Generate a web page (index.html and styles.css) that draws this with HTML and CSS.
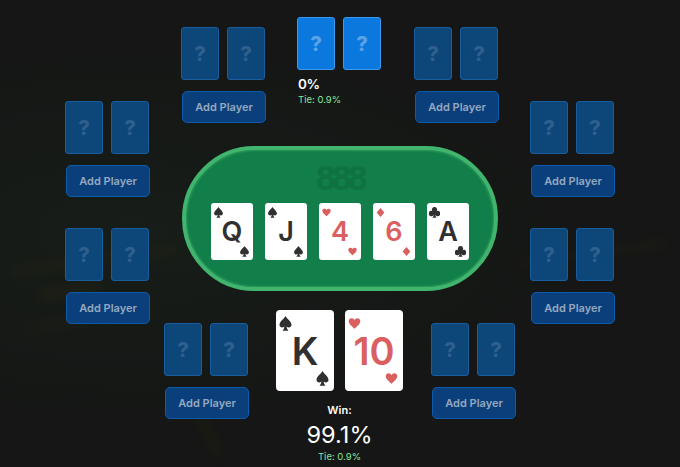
FILE: index.html
```html
<!DOCTYPE html>
<html lang="en">
<head>
    <meta charset="UTF-8">
    <meta name="viewport" content="width=device-width, initial-scale=1.0">
    <title>Poker Odds Calculator</title>
    <link rel="stylesheet" href="styles.css">
</head>
<body>

<svg class="defs" width="0" height="0" aria-hidden="true">
    <symbol id="spade" viewBox="0 0 20 20"><path d="M10 0C8 4 2 7 2 12c0 3 4 4.500 6.500 2C8.300 16.500 7.500 18 6 19.500h8C12.500 18 11.700 16.500 11.500 14c2.500 2.500 6.500 1 6.500-2 0-5-6-8-8-12z"/></symbol>
    <symbol id="heart" viewBox="-3 -3 26 26"><path d="M10 19C6 15 0 11 0 6c0-3 2.300-5 5-5 2.200 0 4 1.200 5 3.200C11 2.200 12.800 1 15 1c2.700 0 5 2 5 5 0 5-6 9-10 13z"/></symbol>
    <symbol id="diamond" viewBox="0 0 20 20"><path d="M10 2l7 8-7 8-7-8z"/></symbol>
    <symbol id="club" viewBox="0 0 20 20"><path d="M10 0a4.800 4.800 0 0 0-4 7.500A4.800 4.800 0 1 0 8.500 14C8.300 16.500 7.500 18 6 19.500h8c-1.500-1.500-2.300-3-2.500-5.500A4.800 4.800 0 1 0 14 7.500 4.800 4.800 0 0 0 10 0z"/></symbol>
</svg>

<div class="felt">
    <div class="streak streak-a"></div>
    <div class="streak streak-b"></div>
    <div class="streak streak-c"></div>
    <div class="streak streak-d"></div>
    <div class="streak streak-e"></div>
</div>

<div class="table">
    <div class="table-logo">888</div>
    <div class="board">
        <div class="card board-card">
            <svg class="pip pip-top"><use href="#spade"/></svg>
            <span class="rank">Q</span>
            <svg class="pip pip-bottom"><use href="#spade"/></svg>
        </div>
        <div class="card board-card">
            <svg class="pip pip-top"><use href="#spade"/></svg>
            <span class="rank">J</span>
            <svg class="pip pip-bottom"><use href="#spade"/></svg>
        </div>
        <div class="card board-card red">
            <svg class="pip pip-top"><use href="#heart"/></svg>
            <span class="rank">4</span>
            <svg class="pip pip-bottom"><use href="#heart"/></svg>
        </div>
        <div class="card board-card red">
            <svg class="pip pip-top"><use href="#diamond"/></svg>
            <span class="rank">6</span>
            <svg class="pip pip-bottom"><use href="#diamond"/></svg>
        </div>
        <div class="card board-card">
            <svg class="pip pip-top"><use href="#club"/></svg>
            <span class="rank">A</span>
            <svg class="pip pip-bottom"><use href="#club"/></svg>
        </div>
    </div>
</div>

<div class="seat seat-top-left">
    <div class="hand"><div class="blank">?</div><div class="blank">?</div></div>
    <button class="add-btn">Add Player</button>
</div>

<div class="seat seat-top-center active">
    <div class="hand"><div class="blank">?</div><div class="blank">?</div></div>
    <div class="seat-odds">
        <div class="odds-small">0%</div>
        <div class="tie">Tie: 0.9%</div>
    </div>
</div>

<div class="seat seat-top-right">
    <div class="hand"><div class="blank">?</div><div class="blank">?</div></div>
    <button class="add-btn">Add Player</button>
</div>

<div class="seat seat-left-upper">
    <div class="hand"><div class="blank">?</div><div class="blank">?</div></div>
    <button class="add-btn">Add Player</button>
</div>

<div class="seat seat-right-upper">
    <div class="hand"><div class="blank">?</div><div class="blank">?</div></div>
    <button class="add-btn">Add Player</button>
</div>

<div class="seat seat-left-lower">
    <div class="hand"><div class="blank">?</div><div class="blank">?</div></div>
    <button class="add-btn">Add Player</button>
</div>

<div class="seat seat-right-lower">
    <div class="hand"><div class="blank">?</div><div class="blank">?</div></div>
    <button class="add-btn">Add Player</button>
</div>

<div class="seat seat-bottom-left">
    <div class="hand"><div class="blank">?</div><div class="blank">?</div></div>
    <button class="add-btn">Add Player</button>
</div>

<div class="seat seat-bottom-right">
    <div class="hand"><div class="blank">?</div><div class="blank">?</div></div>
    <button class="add-btn">Add Player</button>
</div>

<div class="hero">
    <div class="hero-hand">
        <div class="card hero-card">
            <svg class="pip pip-top"><use href="#spade"/></svg>
            <span class="rank">K</span>
            <svg class="pip pip-bottom"><use href="#spade"/></svg>
        </div>
        <div class="card hero-card red">
            <svg class="pip pip-top"><use href="#heart"/></svg>
            <span class="rank">10</span>
            <svg class="pip pip-bottom"><use href="#heart"/></svg>
        </div>
    </div>
    <div class="win-label">Win:</div>
    <div class="win-value">99.1%</div>
    <div class="tie">Tie: 0.9%</div>
</div>

</body>
</html>
```

FILE: styles.css
```css
html, body {
    margin: 0;
    padding: 0;
}

body {
    position: relative;
    width: 680px;
    height: 467px;
    overflow: hidden;
    background-color: #151615;
    font-family: Inter, "Liberation Sans", sans-serif;
    color: #fff;
}

.defs {
    position: absolute;
}

/* background glow and streaks */
.felt {
    position: absolute;
    inset: 0;
    overflow: hidden;
    background: radial-gradient(ellipse at 20% 50%, #171d18 0%, #151615 60%);
}

.streak {
    position: absolute;
    background-color: #4a3c12;
    filter: blur(6px);
    opacity: 0.3;
    transform: rotate(-8deg);
}

.streak-a { left: 10px; top: 258px; width: 170px; height: 4px; }
.streak-b { left: 40px; top: 288px; width: 60px; height: 6px; }
.streak-c { left: 25px; top: 318px; width: 130px; height: 3px; }
.streak-d { left: 520px; top: 252px; width: 150px; height: 3px; }
.streak-e { left: 205px; top: 400px; width: 4px; height: 60px; transform: rotate(-25deg); }

/* table */
.table {
    position: absolute;
    left: 182px;
    top: 146px;
    box-sizing: border-box;
    width: 316px;
    height: 145px;
    display: flex;
    flex-direction: column;
    align-items: center;
    border: 4px solid #41b46d;
    border-radius: 73px;
    background-color: #127e49;
    box-shadow: inset 0 0 2px 1px #2c9a5b;
}

.table-logo {
    margin-top: 12px;
    height: 41px;
    font-family: "Liberation Sans", sans-serif;
    font-size: 35px;
    line-height: 32px;
    font-weight: 700;
    letter-spacing: -3.5px;
    color: #0e7341;
}

.board {
    display: flex;
    gap: 12px;
}

/* cards */
.card {
    position: relative;
    display: flex;
    align-items: center;
    justify-content: center;
    background-color: #fff;
    color: #303030;
    fill: #303030;
    font-weight: 600;
}

.card.red {
    color: #d9605f;
    fill: #d9605f;
}

.board-card {
    width: 42px;
    height: 57px;
    border-radius: 3px;
    font-size: 27px;
}

.hero-card {
    width: 58px;
    height: 81px;
    border-radius: 4px;
    font-size: 38px;
}

.rank {
    line-height: 1;
}

.pip {
    position: absolute;
    width: 11px;
    height: 11px;
}

.pip-top {
    left: 2px;
    top: 4px;
}

.pip-bottom {
    right: 3px;
    bottom: 3px;
}

.hero-card .pip {
    width: 15px;
    height: 15px;
}

.hero-card .pip-top {
    left: 2px;
    top: 6px;
}

.hero-card .pip-bottom {
    right: 4px;
    bottom: 5px;
}

/* seats around the table */
.seat {
    position: absolute;
    display: flex;
    flex-direction: column;
}

.seat-top-left { left: 181px; top: 27px; }
.seat-top-center { left: 297px; top: 17px; }
.seat-top-right { left: 414px; top: 27px; }
.seat-left-upper { left: 65px; top: 101px; }
.seat-right-upper { left: 530px; top: 101px; }
.seat-left-lower { left: 65px; top: 228px; }
.seat-right-lower { left: 530px; top: 228px; }
.seat-bottom-left { left: 164px; top: 323px; }
.seat-bottom-right { left: 431px; top: 323px; }

.hand {
    display: flex;
    gap: 8px;
}

.blank {
    box-sizing: border-box;
    width: 38px;
    height: 53px;
    display: flex;
    align-items: center;
    justify-content: center;
    border: 1px solid #1a5d9c;
    border-radius: 3px;
    background-color: #0d4679;
    color: #2f5f8d;
    font-size: 20px;
    font-weight: 800;
}

.active .blank {
    border-color: #3a9bf0;
    background-color: #0a78dc;
    color: #5aa3e6;
}

.add-btn {
    box-sizing: border-box;
    width: 84px;
    height: 32px;
    margin: 11px 0 0 1px;
    padding: 0;
    border: 1px solid #0d5cab;
    border-radius: 5px;
    background-color: #0b3f7c;
    color: #95a8bf;
    font-family: inherit;
    font-size: 11px;
    font-weight: 600;
}

.seat-odds {
    margin: 6px 0 0 1px;
}

.odds-small {
    font-size: 13.500px;
    line-height: 16px;
    font-weight: 600;
    letter-spacing: -0.5px;
}

.tie {
    font-size: 9.500px;
    line-height: 12px;
    color: #86e39a;
}

.seat-odds .tie {
    margin-top: 2px;
}

/* hero hand and result */
.hero {
    position: absolute;
    left: 276px;
    top: 310px;
    width: 127px;
    display: flex;
    flex-direction: column;
    align-items: center;
}

.hero-hand {
    display: flex;
    gap: 11px;
}

.win-label {
    margin-top: 12px;
    font-size: 11px;
    line-height: 14px;
    font-weight: 600;
}

.win-value {
    margin-top: 4px;
    font-size: 23.500px;
    line-height: 28px;
    font-weight: 400;
}

.hero .tie {
    margin-top: 2px;
}
```
